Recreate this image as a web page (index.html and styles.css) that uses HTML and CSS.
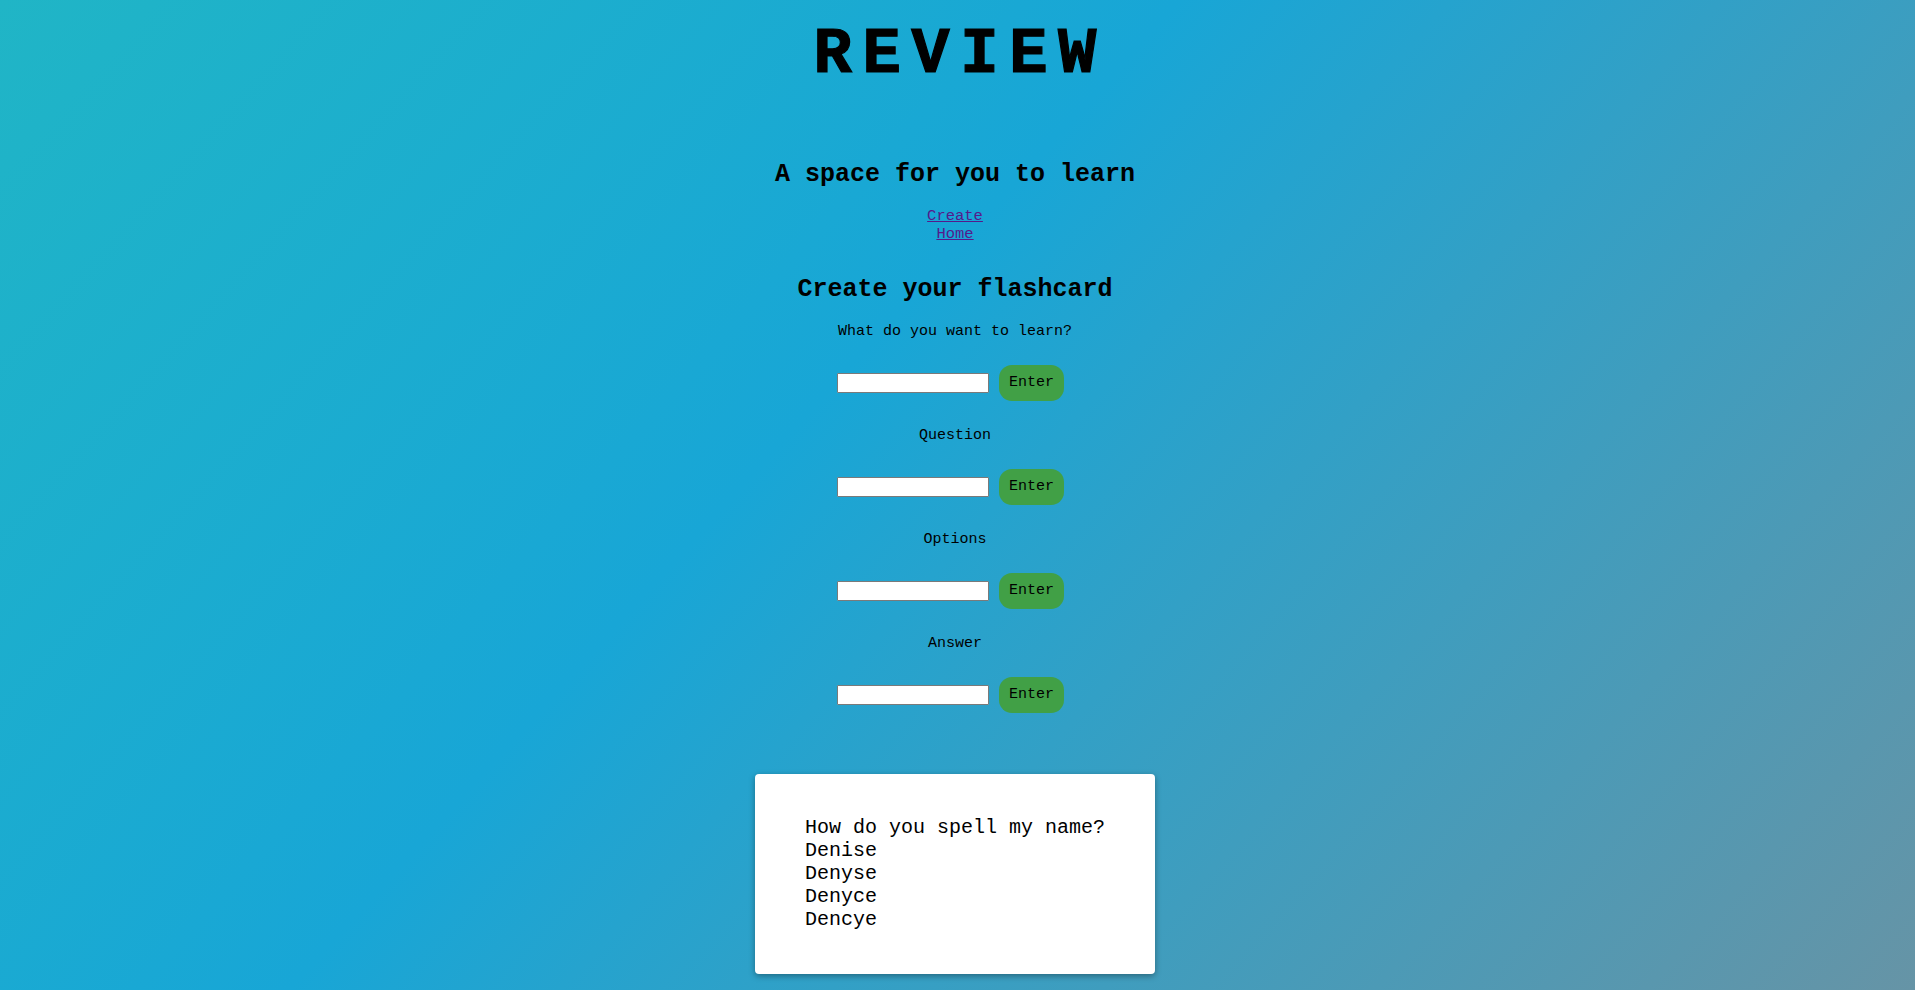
FILE: index.html
```html
<!DOCTYPE html>
<html lang="en">
<head>
<meta charset="utf-8">
<title>Review</title>
<link rel="stylesheet" href="styles.css">
</head>
<body>
  <div class="page">
    <h1 class="logo">REVIEW</h1>
    <h2 class="tagline">A space for you to learn</h2>
    <nav class="nav">
      <a href="#" class="nav-link">Create</a>
      <a href="#" class="nav-link">Home</a>
    </nav>
    <h2 class="section-title">Create your flashcard</h2>
    <form class="form">
      <div class="field">
        <label class="field-label">What do you want to learn?</label>
        <div class="field-row">
          <input class="field-input" type="text">
          <button class="enter-btn" type="button">Enter</button>
        </div>
      </div>
      <div class="field">
        <label class="field-label">Question</label>
        <div class="field-row">
          <input class="field-input" type="text">
          <button class="enter-btn" type="button">Enter</button>
        </div>
      </div>
      <div class="field">
        <label class="field-label">Options</label>
        <div class="field-row">
          <input class="field-input" type="text">
          <button class="enter-btn" type="button">Enter</button>
        </div>
      </div>
      <div class="field">
        <label class="field-label">Answer</label>
        <div class="field-row">
          <input class="field-input" type="text">
          <button class="enter-btn" type="button">Enter</button>
        </div>
      </div>
    </form>
    <div class="card">
      <div class="card-body">
        <div class="card-line">How do you spell my name?</div>
        <div class="card-line">Denise</div>
        <div class="card-line">Denyse</div>
        <div class="card-line">Denyce</div>
        <div class="card-line">Dencye</div>
      </div>
    </div>
  </div>
</body>
</html>
```

FILE: styles.css
```css
html, body {
  margin: 0;
  padding: 0;
  height: 100%;
}

body {
  font-family: "Liberation Mono", "Courier New", monospace;
  color: #000;
  background: linear-gradient(132deg, #20b5c6 0%, #18a6d6 42%, #6694a6 100%);
  overflow: hidden;
}

.page {
  display: flex;
  flex-direction: column;
  align-items: center;
  text-align: center;
  padding-right: 5px;
}

.logo {
  margin: 19px 0 0;
  padding-left: 10.5px;
  font-size: 64px;
  font-weight: bold;
  letter-spacing: 10.5px;
  line-height: normal;
  -webkit-text-stroke: 1.2px #000;
}

.tagline {
  margin: 69px 0 0;
  font-size: 25px;
  font-weight: bold;
  line-height: normal;
}

.nav {
  display: flex;
  flex-direction: column;
  align-items: center;
  margin-top: 19px;
}

.nav-link {
  font-size: 15.5px;
  color: #551a8b;
  text-decoration: underline;
  line-height: 17.5px;
}

.section-title {
  margin: 32px 0 0;
  font-size: 25px;
  font-weight: bold;
  line-height: normal;
}

.form {
  display: flex;
  flex-direction: column;
  align-items: center;
  gap: 26.5px;
  margin-top: 19px;
}

.field {
  display: flex;
  flex-direction: column;
  align-items: center;
  gap: 24.5px;
}

.field-label {
  font-size: 15px;
  line-height: 17px;
}

.field-row {
  display: flex;
  align-items: center;
  gap: 10px;
  padding-right: 9px;
}

.field-input {
  box-sizing: border-box;
  width: 152px;
  height: 20px;
  margin: 0;
  padding: 0 2px;
  border: 1px solid #7a7a7a;
  border-radius: 1px;
  background: #fff;
}

.enter-btn {
  box-sizing: border-box;
  width: 65px;
  height: 36px;
  margin: 0;
  padding: 0;
  border: none;
  border-radius: 13px;
  background: #41a046;
  font-family: "Liberation Mono", "Courier New", monospace;
  font-size: 15px;
  color: #000;
}

.card {
  box-sizing: border-box;
  width: 400px;
  height: 200px;
  margin-top: 61px;
  display: flex;
  align-items: center;
  justify-content: center;
  background: #fff;
  border-radius: 4px;
  box-shadow: 0 2px 6px rgba(0, 0, 0, 0.35);
}

.card-body {
  text-align: left;
  font-size: 20px;
  line-height: 23px;
}
```
